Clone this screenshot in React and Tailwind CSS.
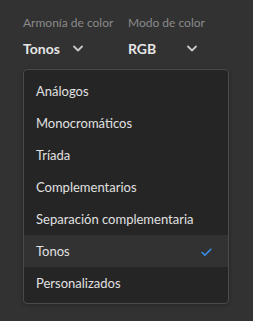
import { Check } from 'lucide-react';

const options = [
  'Análogos',
  'Monocromáticos',
  'Tríada',
  'Complementarios',
  'Separación complementaria',
  'Tonos',
  'Personalizados',
];

const Chevron = () => (
  <svg width="10" height="7" viewBox="0 0 10 7" fill="none">
    <path d="M1 1.5 L5 5.5 L9 1.5" stroke="#c8c8c8" strokeWidth="1.8" strokeLinecap="round" strokeLinejoin="round" />
  </svg>
);

export default function App() {
  const selected = 'Tonos';
  return (
    <div className="w-[253px] h-[321px] bg-[#323232] pt-[15px] pl-[23px]" style={{ fontFamily: 'Lato, "Noto Sans", sans-serif' }}>
      <div className="flex">
        <div className="w-[105px]">
          <div className="text-[12px] leading-4 text-[#8a8a8a] whitespace-nowrap">Armonía de color</div>
          <div className="mt-[7px] flex items-center h-5 gap-[13px]">
            <span className="text-[14px] font-bold text-[#e6e6e6]">Tonos</span>
            <Chevron />
          </div>
        </div>
        <div className="w-[69px]">
          <div className="text-[12px] leading-4 text-[#8a8a8a] whitespace-nowrap">Modo de color</div>
          <div className="mt-[7px] flex items-center justify-between h-5">
            <span className="text-[14px] font-bold text-[#e6e6e6]">RGB</span>
            <Chevron />
          </div>
        </div>
      </div>

      <div className="mt-[11px] w-[206px] rounded-[4px] border border-[#4a4a4a] bg-[#252525] pt-[5px] pb-[4px] shadow-[0_1px_4px_rgba(0,0,0,0.25)]">
        {options.map(opt => (
          <div
            key={opt}
            className={`h-8 flex items-center pl-3 pr-[15px] pt-[2px] text-[13px] text-[#e0e0e0] ${opt === selected ? 'bg-[#323232]' : ''}`}
          >
            <span>{opt}</span>
            {opt === selected && <Check className="ml-auto text-[#378ef0]" size={13} strokeWidth={3} />}
          </div>
        ))}
      </div>
    </div>
  );
}
